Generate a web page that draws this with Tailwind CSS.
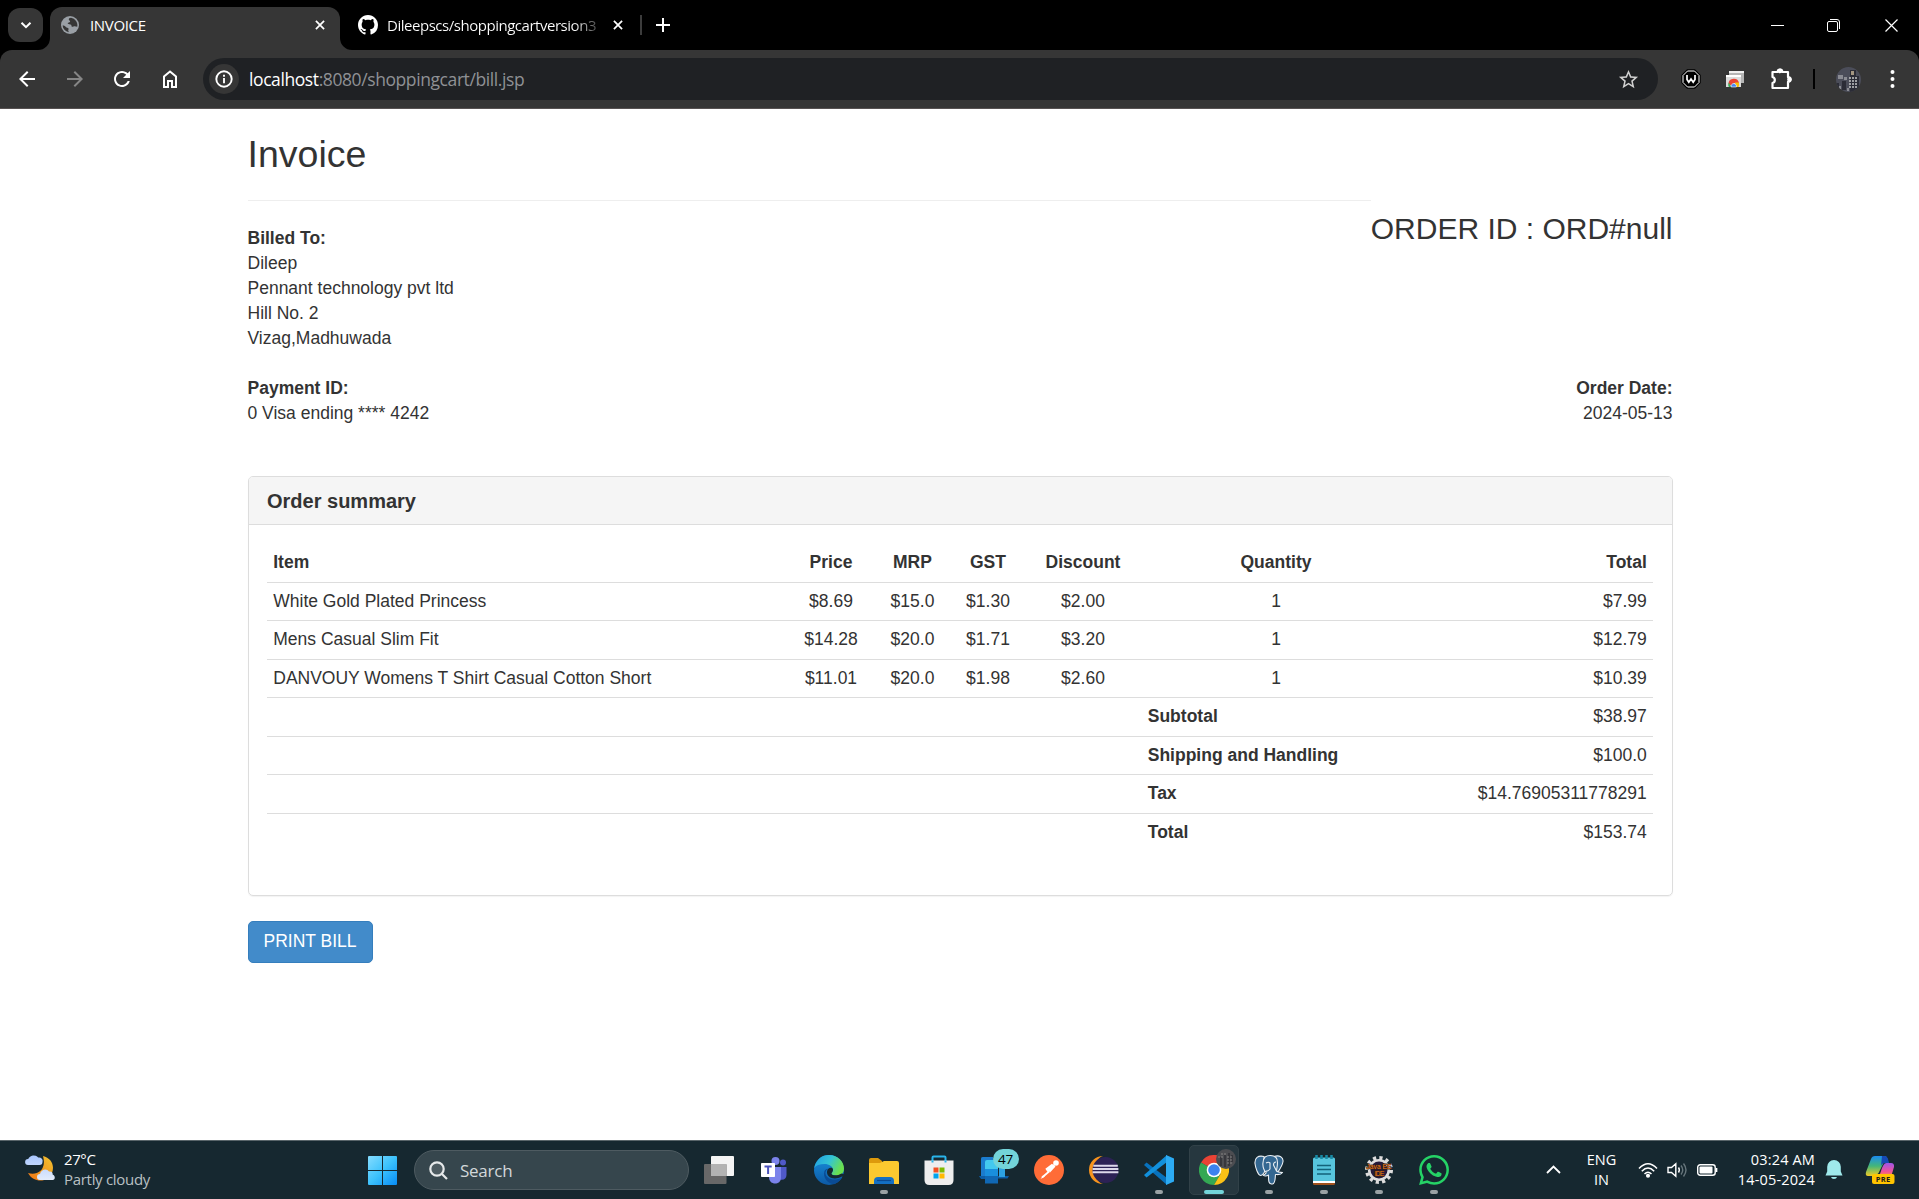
<!DOCTYPE html>
<html lang="en">
<head>
<meta charset="utf-8">
<title>INVOICE</title>
<script src="https://cdn.jsdelivr.net/npm/@tailwindcss/browser@4"></script>
</head>
<body class="flex h-screen w-screen flex-col overflow-hidden bg-white font-['Open_Sans',sans-serif]">

<!-- Tab strip -->
<div class="flex h-[50px] shrink-0 items-stretch bg-black text-white">
  <div class="ml-2 mt-2 flex h-[34px] w-[35px] items-center justify-center rounded-xl bg-[#363636]">
    <svg class="size-3" viewBox="0 0 12 12" fill="none" stroke="#fff" stroke-width="2"><path d="M1.5 3.7 6 8.2l4.500-4.500"/></svg>
  </div>
  <div class="relative ml-[7px] mt-[7px] flex w-[290px] items-center rounded-t-xl bg-[#363636] pb-[7px] pl-[11px] pr-[15px]">
    <svg class="absolute -left-3 bottom-0 size-3" viewBox="0 0 12 12"><path fill="#363636" d="M12 0v12H0A12 12 0 0 0 12 0z"/></svg>
    <svg class="absolute -right-3 bottom-0 size-3" viewBox="0 0 12 12"><path fill="#363636" d="M0 0v12h12A12 12 0 0 1 0 0z"/></svg>
    <svg class="size-[18px]" viewBox="0 0 18 18"><circle cx="9" cy="9" r="9" fill="#9aa0a6"/><path fill="#363636" d="M10 1.800C7.500 2 7.300 3.500 8.500 4.500c1.500.8 0 2-1.200 2.200-1.200.3-.6 1.500 1 1.500 1.700 0 2.200.8 2.200 1.800 0 .9 1.200 1 2 .6.700-.5 2.500-.2 3.700.2a7.400 7.400 0 0 0-6.200-9zM1.600 9.500c1.700 0 2.800.7 3.300 1.400.6.900 2.200.6 2.600 1.500.4 1-.6 1.600-.2 2.500.2.500.6.900.9 1.400a7.400 7.400 0 0 1-6.600-6.800z"/></svg>
    <span class="ml-[11px] text-[15px] leading-5 tracking-[-0.35px]">INVOICE</span>
    <svg class="ml-auto size-[10px]" viewBox="0 0 11 11" stroke="#fff" stroke-width="1.900"><path d="m1 1 9 9m0-9-9 9"/></svg>
  </div>
  <div class="flex h-[50px] w-[301px] items-center pl-[18px]">
    <svg class="size-5 shrink-0" viewBox="0 0 16 16" fill="#fff"><path d="M8 0C3.580 0 0 3.580 0 8c0 3.540 2.290 6.530 5.470 7.590.4.070.55-.17.55-.38 0-.19-.01-.82-.01-1.490-2.010.37-2.530-.49-2.690-.94-.09-.23-.48-.94-.82-1.130-.28-.15-.68-.52-.01-.53.63-.01 1.080.58 1.230.82.72 1.210 1.870.87 2.330.66.07-.52.28-.87.51-1.070-1.780-.2-3.640-.89-3.640-3.950 0-.87.31-1.590.82-2.150-.08-.2-.36-1.020.08-2.120 0 0 .67-.21 2.200.82.64-.18 1.320-.27 2-.27s1.360.09 2 .27c1.530-1.040 2.200-.82 2.200-.82.44 1.100.16 1.920.08 2.120.51.56.82 1.270.82 2.150 0 3.070-1.870 3.750-3.650 3.950.29.25.54.73.54 1.480 0 1.070-.01 1.930-.01 2.200 0 .21.15.46.55.38A8.010 8.010 0 0 0 16 8c0-4.420-3.580-8-8-8z"/></svg>
    <span class="ml-[9px] w-[212px] shrink-0 whitespace-nowrap bg-gradient-to-r from-white from-88% to-white/20 bg-clip-text text-[15px] leading-5 tracking-[-0.47px] text-transparent">Dileepscs/shoppingcartversion3</span>
    <svg class="ml-[14px] size-[10px] shrink-0" viewBox="0 0 11 11" stroke="#fff" stroke-width="1.900"><path d="m1 1 9 9m0-9-9 9"/></svg>
    <span class="ml-[17px] h-5 w-[2px] shrink-0 bg-[#3c3c3c]"></span>
  </div>
  <div class="flex items-center pl-[14.500px]">
    <svg class="size-[14px]" viewBox="0 0 14 14" stroke="#fff" stroke-width="2"><path d="M7 0v14M0 7h14"/></svg>
  </div>
  <div class="ml-auto flex items-center">
    <svg class="mr-[43px] h-[13px] w-[13px]" viewBox="0 0 13 13"><path d="M0 6.500h13" stroke="#fff"/></svg>
    <svg class="mr-[45px] size-[13px]" viewBox="0 0 13 13" fill="none" stroke="#fff"><rect x=".5" y="2.500" width="10" height="10" rx="1.500"/><path d="M3 .5h7a2.500 2.500 0 0 1 2.500 2.500v7"/></svg>
    <svg class="mr-[21px] size-[13px]" viewBox="0 0 13 13" stroke="#fff" stroke-width="1.200"><path d="m.5.5 12 12m0-12-12 12"/></svg>
  </div>
</div>

<!-- Toolbar -->
<div class="h-[59px] shrink-0 bg-black">
<div class="flex h-[59px] items-center rounded-t-xl border-b border-[#575252] bg-[#363636]">
  <svg class="ml-[15px] size-6" viewBox="0 0 24 24" fill="#fff"><path d="M20 11H7.830l5.590-5.590L12 4l-8 8 8 8 1.410-1.410L7.830 13H20v-2z"/></svg>
  <svg class="ml-6 size-6" viewBox="0 0 24 24" fill="#868686"><path d="m12 4-1.410 1.410L16.170 11H4v2h12.170l-5.580 5.590L12 20l8-8z"/></svg>
  <svg class="ml-[23px] size-6" viewBox="0 0 24 24" fill="#fff"><path d="M17.650 6.350C16.200 4.900 14.210 4 12 4c-4.420 0-7.990 3.580-7.990 8s3.570 8 7.990 8c3.730 0 6.840-2.550 7.730-6h-2.080c-.82 2.330-3.040 4-5.650 4-3.310 0-6-2.690-6-6s2.690-6 6-6c1.660 0 3.140.69 4.220 1.780L13 11h7V4l-2.350 2.350z"/></svg>
  <svg class="ml-6 size-6" viewBox="0 0 24 24" fill="none" stroke="#fff" stroke-width="2"><path d="M6 20V9.500L12 4.500l6 5V20h-4v-6h-4v6z"/></svg>
  <div class="ml-[21px] flex h-[42px] w-[1455px] items-center rounded-full bg-[#1f2124] pl-[6px]">
    <span class="flex size-[30px] items-center justify-center rounded-full bg-[#363636]">
      <svg class="size-[18px]" viewBox="0 0 18 18" fill="none" stroke="#fff" stroke-width="1.900"><circle cx="9" cy="9" r="7.700"/><path d="M9 8v5.200M9 4.800v1.900"/></svg>
    </span>
    <span class="ml-[10px] text-[17.500px] leading-6 tracking-[-0.41px] text-[#8f9195]"><span class="text-white">localhost</span>:8080/shoppingcart/bill.jsp</span>
    <svg class="ml-auto mr-[18px] size-[23px]" viewBox="0 0 24 24" fill="#d0d0d0"><path d="M22 9.240l-7.190-.62L12 2 9.190 8.630 2 9.240l5.460 4.730L5.820 21 12 17.270 18.180 21l-1.630-7.030L22 9.240zM12 15.400l-3.760 2.270 1-4.280-3.320-2.880 4.380-.38L12 6.100l1.710 4.040 4.380.38-3.320 2.880 1 4.280L12 15.400z"/></svg>
  </div>
  <svg class="ml-[22.500px] size-5" viewBox="0 0 20 20"><path d="M6 .3h8L19.700 6v8L14 19.700H6L.3 14V6z" fill="#000"/><path d="M6.500 2h7L18 6.500v7L13.500 18h-7L2 13.500v-7z" fill="#000" stroke="#fff" stroke-width="1"/><path d="M6 6v4.500l1.800 2.700L10 10l2.200 3.200L14 10.500V6" fill="none" stroke="#fff" stroke-width="1.700"/></svg>
  <svg class="ml-[24.500px] size-5" viewBox="0 0 20 20"><rect x="4" y="2" width="15" height="12" fill="#b5b5b5"/><rect x="4" y="2" width="15" height="2" fill="#f0f0f0"/><rect x="1" y="6" width="15" height="12" fill="#dcdcdc"/><rect x="1" y="6" width="15" height="2" fill="#fff"/><path d="M3.500 14.500a5.300 5.300 0 0 1 10.500-.5H9L6.500 17z" fill="#ea4335"/><path d="M3.600 13.500 6.500 18H3.800a6 6 0 0 1-.2-4.500z" fill="#34a853"/><path d="M10 13.500h3.800a6 6 0 0 1-.3 4.500H10z" fill="#fbbc04"/><path d="M6.200 18a2.700 2.700 0 1 1 5.200 0z" fill="#4285f4" stroke="#fff" stroke-width=".6"/></svg>
  <svg class="ml-[25px] size-[22px]" viewBox="0 0 22 22" fill="none" stroke="#fff" stroke-width="2.200" stroke-linejoin="round"><path d="M2.500 4h5.200a2 2 0 0 1 4.600 0H18v5.200a2 2 0 0 1 0 4.600V20H2.500v-5a3.100 3.100 0 0 0 0-6z"/><circle cx="10" cy="2.900" r="1.300" fill="#fff"/><circle cx="19.500" cy="11.500" r="1.300" fill="#fff"/></svg>
  <span class="ml-[21px] h-5 w-[2px] bg-black"></span>
  <svg class="ml-[20.500px] size-[25px]" viewBox="0 0 25 25"><defs><clipPath id="av"><circle cx="12.500" cy="12.500" r="12.500"/></clipPath></defs><g clip-path="url(#av)"><path fill="#4b4d59" d="M0 0h25v25H0z"/><path fill="#8b8c93" d="M2 8h5v4H2zm6 2h3v3H8zM3 19h2v3H3zm8 2h2v3h-2z"/><path fill="#2b2c36" d="M6 14h4v9H6zM0 16h3v9H0zm14-9V3h6v6h3v16h-9z"/><path fill="#a39681" d="M15 4h3v4h-3z"/><path stroke="#c4c4c5" stroke-width="1.400" stroke-dasharray="2 1" d="M13 11h9m-9 3h9m-9 3h9m-9 3h9"/></g></svg>
  <svg class="ml-[21.500px] h-[20px] w-[24px]" viewBox="0 0 24 20" fill="#fff"><circle cx="10.500" cy="3" r="2"/><circle cx="10.500" cy="10" r="2"/><circle cx="10.500" cy="17" r="2"/></svg>
</div>
</div>

<!-- Invoice page -->
<main class="ml-[247.500px] flex w-[1425px] grow flex-col font-['Liberation_Sans',sans-serif] text-[17.500px] leading-[25px] text-[#333]">
  <div class="flex justify-between">
    <h2 class="mt-[25px] h-[67px] grow border-b border-[#eee] pr-4 text-[37.500px] leading-[41px]">Invoice</h2>
    <h3 class="mt-[103px] h-[14px] whitespace-nowrap text-[30px] leading-[33px]">ORDER ID : ORD#null</h3>
  </div>
  <address class="not-italic"><strong>Billed To:</strong><br>Dileep<br>Pennant technology pvt ltd<br>Hill No. 2<br>Vizag,Madhuwada</address>
  <div class="mt-[25px] flex justify-between">
    <address class="not-italic"><strong>Payment ID:</strong><br>0 Visa ending **** 4242</address>
    <address class="text-right not-italic"><strong>Order Date:</strong><br>2024-05-13</address>
  </div>

  <section class="mt-[50px] h-[420px] shrink-0 rounded-[5px] border border-[#ddd] shadow-[0_1px_1px_rgba(0,0,0,0.05)]">
    <h3 class="flex h-[48px] items-center rounded-t border-b border-[#ddd] bg-[#f5f5f5] px-[18.500px] text-xl font-bold">Order summary</h3>
    <div class="px-[18.500px] pt-[19px] text-center [&>div]:grid [&>div]:h-[38.500px] [&>div]:grid-cols-[522.500px_83px_80px_71px_119px_267px_243.500px] [&>div]:items-center [&>div]:border-b [&>div]:border-[#ddd] [&>div>*:first-child]:pl-[6.250px] [&>div>*:first-child]:text-left [&>div>*:last-child]:pr-[6.250px] [&>div>*:last-child]:text-right">
      <div class="font-bold"><span>Item</span><span>Price</span><span>MRP</span><span>GST</span><span>Discount</span><span>Quantity</span><span>Total</span></div>
      <div><span>White Gold Plated Princess</span><span>$8.69</span><span>$15.0</span><span>$1.30</span><span>$2.00</span><span>1</span><span>$7.99</span></div>
      <div><span>Mens Casual Slim Fit</span><span>$14.28</span><span>$20.0</span><span>$1.71</span><span>$3.20</span><span>1</span><span>$12.79</span></div>
      <div><span>DANVOUY Womens T Shirt Casual Cotton Short</span><span>$11.01</span><span>$20.0</span><span>$1.98</span><span>$2.60</span><span>1</span><span>$10.39</span></div>
      <div><span class="col-span-5"></span><strong class="pl-[5.250px] text-left">Subtotal</strong><span>$38.97</span></div>
      <div><span class="col-span-5"></span><strong class="pl-[5.250px] text-left">Shipping and Handling</strong><span>$100.0</span></div>
      <div><span class="col-span-5"></span><strong class="pl-[5.250px] text-left">Tax</strong><span>$14.76905311778291</span></div>
      <div class="border-b-0!"><span class="col-span-5"></span><strong class="pl-[5.250px] text-left">Total</strong><span>$153.74</span></div>
    </div>
  </section>
  <button class="mt-[25px] h-[42px] w-[125px] rounded-[5px] border border-[#357ebd] bg-[#428bca] pb-[2px] text-white">PRINT BILL</button>
</main>

<!-- Taskbar -->
<footer class="flex h-[59px] shrink-0 items-stretch border-t border-[#59656a] bg-[#162830] text-[15px] leading-5 text-white">
  <div class="flex w-[354.500px] items-center pl-[25px]">
    <svg class="mb-1 size-[30px]" viewBox="0 0 30 30"><defs><linearGradient id="mo" x1="1" x2="0" y2="1"><stop stop-color="#f4c531"/><stop offset="1" stop-color="#ee7414"/></linearGradient><linearGradient id="cl" x2="0" y2="1"><stop stop-color="#a9c7ff"/><stop offset="1" stop-color="#e3ecfb"/></linearGradient></defs><path fill="url(#mo)" d="M18 3c8 2 12 9 9 17-3 9-18 11-24 0 9 3 19-3 15-17z"/><path fill="url(#cl)" d="M3 12a3 3 0 0 1 .2-6 6 6 0 0 1 10-1.500c3-.5 5 1.500 4.300 4.500 0 2-1 3-3 3zM15 27a3 3 0 0 1 0-6c1-5 7-6 9-2.500 2.500-.5 4 1 3.700 3.200 2.500 0 3 5.300 0 5.300z"/></svg>
    <div class="ml-[9px] pb-[3px] leading-5"><div class="tracking-[-0.4px]">27°C</div><div class="tracking-[-0.3px] text-[#b9c0c3]">Partly cloudy</div></div>
  </div>
  <div class="flex w-[55px] items-center justify-center">
    <svg class="size-[29px]" viewBox="0 0 29 29"><defs><linearGradient id="wi" x2="1" y2="1"><stop stop-color="#85dcff"/><stop offset=".5" stop-color="#3cc2fc"/><stop offset="1" stop-color="#078cf5"/></linearGradient></defs><path fill="url(#wi)" d="M0 1q0-1 1-1h13v14H0zM15 0h13q1 0 1 1v13H15zM0 15h14v14H1q-1 0-1-1zM15 15h14v13q0 1-1 1H15z"/></svg>
  </div>
  <div class="ml-[4.500px] mr-[2.500px] mt-[9px] flex h-10 w-[275px] items-center rounded-full border border-[#4e5b61] bg-[#36464d] pl-[14px]">
    <svg class="size-[19px]" viewBox="0 0 19 19" fill="none" stroke="#e6e9ea" stroke-width="2.200"><circle cx="8" cy="8" r="6.700" fill="#4d5b61"/><path d="m13 13 5 5"/></svg>
    <span class="ml-3 pt-px text-[17px] tracking-[-0.25px] text-[#d3d8da]">Search</span>
  </div>

  <div class="flex [&>div]:relative [&>div]:flex [&>div]:w-[55px] [&>div]:items-center [&>div]:justify-center [&_i]:absolute [&_i]:bottom-[5px] [&_i]:h-1 [&_i]:w-2 [&_i]:rounded-full [&_i]:bg-[#9aa2a5] [&_svg]:size-[30px]">
    <div><svg viewBox="0 0 30 30"><rect x="7" y="1" width="23" height="20" rx="1" fill="#f4f4f4"/><rect x="0" y="9" width="22.500" height="20" rx="1" fill="#686868"/><path fill="#b3b3b3" d="M7 9h15.500v12H7z"/></svg></div>
    <div><svg viewBox="0 0 30 30"><circle cx="24" cy="7.500" r="3" fill="#5059c9"/><path d="M19 12h8.500v8c0 4-3 5.500-7 4.500z" fill="#5059c9"/><circle cx="16.500" cy="6" r="4" fill="#7b83eb"/><path d="M10 12h12v10c0 5-3 6.500-6 6.500s-6-2-6-6.500z" fill="#7b83eb"/><rect x="2" y="8" width="14" height="14" rx=".8" fill="#fff"/><path d="M5.500 11.500h7.200m-3.600 0v7.500" stroke="#4b53bc" stroke-width="2"/></svg></div>
    <div><svg viewBox="0 0 30 30"><defs><linearGradient id="e1" x2="1" y2=".4"><stop stop-color="#1f9de4"/><stop offset=".55" stop-color="#34c4d5"/><stop offset="1" stop-color="#6ae04e"/></linearGradient><linearGradient id="e2" x2="0" y2="1"><stop stop-color="#1991df"/><stop offset="1" stop-color="#0c59a4"/></linearGradient></defs><circle cx="15" cy="15" r="15" fill="url(#e2)"/><path fill="url(#e1)" d="M.2 13C2 4.500 8 0 15 0c9 0 15 6.500 15 13.500 0 5-3.500 7-7.500 7-3 0-5.500-1-5-2.300.8-1.200 1.500-2 1.500-3.500 0-3-4-5.700-8.500-5.700C5.500 9 2 10.500.2 13z"/><path fill="#0a4b94" d="M10.500 16c-2 6.500 3 12.500 9.500 13.200 3.500-1.200 6.500-3.500 8-6.700-8 4.500-17 1-16.500-5 .2-1.600 1.300-3 2.600-3.800-1.800.2-3 .9-3.600 2.300z"/><path fill="#162830" d="M19 14.700c0-2.700-5.500-2.700-6 2-.5 5.500 7 9 14.500 5 .8-.5 1.500-.1 1 .8l2-3-3-1c-4.500 3-10.500 2-10-.3.800-1.200 1.500-2 1.500-3.500z"/></svg></div>
    <div><svg viewBox="0 0 30 30"><path fill="#dd9a0c" d="M0 5q0-2 2-2h7l4 3v4H0z"/><path fill="#fbc92f" d="M0 8h11l4-2h13q2 0 2 2v21H0z"/><path fill="#1370c4" d="M5 29v-3q0-4 4-4h12q4 0 4 4v3z"/><path d="M8 25.500h14" stroke="#0a4a92" stroke-width="1.200"/></svg><i></i></div>
    <div><svg viewBox="0 0 30 30"><path d="M8.500 8V2.500q0-1 1-1h11q1 0 1 1V8" fill="none" stroke="#29b4ea" stroke-width="2"/><path fill="#eee" d="M.5 5.500h29V25q0 5-5 5h-19q-5 0-5-5z"/><path d="M8.500 7.500V5.500m13 2V5.500" stroke="#29b4ea" stroke-width="2"/><path fill="#f25022" d="M9.500 12.500h5v5h-5z"/><path fill="#7fba00" d="M15.500 12.500h5v5h-5z"/><path fill="#00a4ef" d="M9.500 18.500h5v5h-5z"/><path fill="#ffb900" d="M15.500 18.500h5v5h-5z"/></svg></div>
    <div><svg viewBox="0 0 30 30"><path fill="#0c5da6" d="M2 4q0-2 2-2h10v22H2zM0 21h30l-1.500 2.500H1.500z"/><path fill="#1b7cce" d="M2 4q0-2 2-2h10v19H2z"/><path fill="#43c9ef" d="M6 7q0-2 2-2h9q2 0 2 2v21H6z"/><path fill="#198fdd" d="M6 14h13v14H6z"/><path fill="#1068b4" d="M6 21h13v7.500H6z"/><path fill="#2da2e2" d="M20 8h6v14h-6z"/></svg><span class="absolute right-[3px] top-[8px] flex h-5 w-[26px] items-center justify-center rounded-full bg-[#73d4d9] text-[13.500px] tracking-tight text-black">47</span></div>
    <div><svg viewBox="0 0 30 30"><circle cx="15" cy="15" r="15" fill="#ff6c37"/><circle cx="22" cy="8" r="2.800" fill="#fff"/><path d="m20.500 10.500-6.500 5.500m4.500-6.500-6 4.500 2 3L8 22.500" fill="none" stroke="#fff" stroke-width="1.700"/><path fill="#fff" d="m13 14 6-5 2.500 2.500-5.500 6zM6.500 24l4.500-2.500-2-1z"/></svg></div>
    <div><svg viewBox="0 0 30 30"><path d="M14 1a14 14 0 0 0 0 28C3 26 3 4 14 1z" fill="#f7941e"/><circle cx="16.500" cy="15" r="13" fill="#2c2255"/><path d="M4.300 10.800h24.500M3.600 14h25.800M3.600 17.200h25.800" stroke="#dcd8ea" stroke-width="1.900"/></svg></div>
    <div><svg viewBox="0 0 30 30"><path fill="#0872bd" d="m0 10 2.500-2.500L23 23v7z"/><path fill="#1290dc" d="m0 20 2.500 2.500L23 7V0z"/><path fill="#2cabf3" d="m22 0 8 3.500v23L22 30z"/></svg><i></i></div>
    <div><span class="absolute left-[2px] top-1 h-[50px] w-[50px] rounded-[5px] border border-[#314148] bg-[#26373f]"></span><svg class="relative" viewBox="0 0 30 30"><path fill="#ea4335" d="M2 7.500A15 15 0 0 1 28 7.500L15 15z"/><path fill="#34a853" d="M2 7.500A15 15 0 0 0 15 30l6.500-11L15 15z"/><path fill="#fbc116" d="M28 7.500A15 15 0 0 1 15 30l6.500-11L15 8z"/><path fill="#ea4335" d="M15 0a15 15 0 0 1 13 8H15z"/><circle cx="15" cy="15" r="7.300" fill="#fff"/><circle cx="15" cy="15" r="5.800" fill="#3c82ef"/></svg><svg class="absolute right-[6px] top-[8px] size-5!" viewBox="0 0 20 20"><circle cx="10" cy="10" r="10" fill="#4c4d51"/><path d="M5 8v9m4-11v12m4-14v13m3-11v7" stroke="#2b2c32" stroke-width="1.300"/><path d="M2 8h5m4 0h6m-6 3h6m-6 3h5M5 5h5" stroke="#858483" stroke-dasharray="2 1"/></svg><i class="w-5! bg-[#73d4d9]!"></i></div>
    <div><svg viewBox="0 0 30 30" fill="#336791" stroke="#e9eef2" stroke-width="1.100" stroke-linejoin="round"><path d="M10 1.500C4 0 .5 3 1 8.500 1.500 13 4 20 6.500 20.500c1.500.2 3-2 4-3.500z"/><path d="M20 1.500c5.500-2 9.500 1 9 5-.5 4-4 9-6 12l-3-2z"/><path d="M11 2c3-2 8-2 11 .5 3 3 1 9 .5 13.500 2 2 5 1 6 1.500-2 3-5 2-7 2-.5 4 0 9-3 9.500-4 .6-4-3-4-9-2 1.500-5 1-5.500 0 2-.5 3.500-1 3-3C8 14 8 5 11 2z"/><path fill="none" d="M12 8q2.500-1.500 4 0v6q-2 2.500-4 2M22 7q-2.500 0-2.500 3l3 6"/></svg><i></i></div>
    <div><svg viewBox="0 0 30 30"><path fill="#a0511c" d="M4 23h22v5.500q0 1.500-1.500 1.500h-19Q4 30 4 28.500z"/><path fill="#fff" d="M4 23h22v5H4z"/><path fill="#57c5dd" d="M4 4q0-1.500 1.500-1.500h19Q26 2.500 26 4v22H4z"/><path d="M8 10.500h14M8 14.500h14M8 19h14" stroke="#13627a" stroke-width="1.700"/><path d="M7.500 0v4m5-4v4m5-4v4m5-4v4" stroke="#178ba6" stroke-width="2.500"/></svg><i></i></div>
    <div><svg viewBox="0 0 30 30"><circle cx="15" cy="15" r="12" fill="none" stroke="#ddd" stroke-width="4" stroke-dasharray="3.140 3.140"/><circle cx="15" cy="15" r="9.800" fill="#241b3b" stroke="#ddd" stroke-width="2.600"/><text x="15" y="13.800" text-anchor="middle" textLength="25" lengthAdjust="spacingAndGlyphs" font-size="7" fill="#f58220" font-family="Liberation Sans" stroke="#3a1e10" stroke-width="1" paint-order="stroke">Java EE</text><text x="15.500" y="20.500" text-anchor="middle" textLength="10" font-size="7" fill="#f58220" font-family="Liberation Sans" stroke="#3a1e10" stroke-width="1" paint-order="stroke">IDE</text></svg><i></i></div>
    <div><svg viewBox="0 0 24 24" fill="#25d366"><path d="M17.472 14.382c-.297-.149-1.758-.867-2.030-.967-.273-.099-.471-.148-.67.150-.197.297-.767.966-.94 1.164-.173.199-.347.223-.644.075-.297-.15-1.255-.463-2.390-1.475-.883-.788-1.480-1.761-1.653-2.059-.173-.297-.018-.458.130-.606.134-.133.298-.347.446-.52.149-.174.198-.298.298-.497.099-.198.050-.371-.025-.52-.075-.149-.669-1.612-.916-2.207-.242-.579-.487-.5-.669-.51-.173-.008-.371-.01-.57-.01-.198 0-.52.074-.792.372-.272.297-1.040 1.016-1.040 2.479 0 1.462 1.065 2.875 1.213 3.074.149.198 2.096 3.200 5.077 4.487.709.306 1.262.489 1.694.625.712.227 1.360.195 1.871.118.571-.085 1.758-.719 2.006-1.413.248-.694.248-1.289.173-1.413-.074-.124-.272-.198-.57-.347m-5.421 7.403h-.004a9.870 9.870 0 0 1-5.031-1.378l-.361-.214-3.741.982.998-3.648-.235-.374a9.860 9.860 0 0 1-1.510-5.260c.001-5.450 4.436-9.884 9.888-9.884 2.640 0 5.122 1.030 6.988 2.898a9.825 9.825 0 0 1 2.893 6.994c-.003 5.450-4.437 9.884-9.885 9.884m8.413-18.297A11.815 11.815 0 0 0 12.050 0C5.495 0 .16 5.335.157 11.892c0 2.096.547 4.142 1.588 5.945L.057 24l6.305-1.654a11.882 11.882 0 0 0 5.683 1.448h.005c6.554 0 11.890-5.335 11.893-11.893a11.821 11.821 0 0 0-3.480-8.413z"/></svg><i></i></div>
  </div>

  <div class="ml-auto flex items-center">
    <svg class="mr-[19px] h-3 w-[15px]" viewBox="0 0 15 12" fill="none" stroke="#fff" stroke-width="1.800"><path d="m1 9 6.500-6.500L14 9"/></svg>
    <div class="mr-[15px] w-[43px] text-center text-[14.500px]">ENG<br>IN</div>
    <svg class="mr-[9px] h-4 w-5" viewBox="0 0 20 16" fill="none" stroke="#fff" stroke-width="1.500"><path d="M1 6.500q9-9.500 18 0M3.800 9.200q6.200-6.400 12.400 0M6.500 12q3.500-3.500 7 0"/><circle cx="10" cy="13.800" r="1.300" fill="#fff"/></svg>
    <svg class="mr-[10px] h-4 w-5" viewBox="0 0 20 16" fill="none" stroke="#fff" stroke-width="1.400"><path d="M1 5.500h3.500L8.800 1.800v12.400L4.500 10.500H1zM11.500 5.500q1.700 2.500 0 5"/><path stroke="#66757b" d="M14 3.500q3.500 4.500 0 9M16.500 1.500q5 6.500 0 13"/></svg>
    <svg class="mr-[17px] h-3 w-[22px]" viewBox="0 0 22 12"><rect x=".7" y=".7" width="17.500" height="10.600" rx="2.500" fill="none" stroke="#fff" stroke-width="1.400"/><rect x="2.500" y="2.500" width="13" height="7" rx="1" fill="#fff"/><path d="M19.500 4v4" stroke="#fff" stroke-width="1.700"/></svg>
    <div class="mr-[10px] w-[79px] whitespace-nowrap pb-px text-right text-[14.500px] tracking-[0.15px]">03:24 AM<br>14-05-2024</div>
    <svg class="mr-[22px] h-5 w-[18px]" viewBox="0 0 18 20" fill="#9fe9eb"><path d="M9 0a6.800 6.800 0 0 1 6.800 6.800v4.700l1.700 4H.5l1.700-4V6.800A6.800 6.800 0 0 1 9 0zM6 17h6q-.5 2-3 2t-3-2z"/></svg>
    <svg class="mr-[23px] h-[30px] w-[31px]" viewBox="0 0 31 30"><defs><linearGradient id="c1" x2="0" y2="1"><stop stop-color="#1b8cf0"/><stop offset=".5" stop-color="#43b67a"/><stop offset="1" stop-color="#f0cb25"/></linearGradient><linearGradient id="c2" x2="0" y2="1"><stop stop-color="#9d55e9"/><stop offset=".6" stop-color="#f0539a"/><stop offset="1" stop-color="#ff953a"/></linearGradient></defs><path fill="url(#c1)" d="M10 1h9q3 0 3.500 3l1 4h-5l-5 10q-2 3-5 3H3q-3 0-2-4L6 4q1-3 4-3z"/><path fill="#1649b5" d="M17 1h3q2 0 3 3l1 4h-4q-3 0-4 3z"/><path fill="url(#c2)" d="m17 13 1.500-3q1-2 3-2H26q3.500 0 3 4l-3 10H14z"/><rect x="7" y="19" width="22.500" height="10" rx="2" fill="#ffc400"/><text x="18.200" y="26.900" text-anchor="middle" font-size="7.500" font-weight="700" fill="#1b1b1b" font-family="Open Sans" letter-spacing=".3">PRE</text></svg>
  </div>
</footer>
</body>
</html>
